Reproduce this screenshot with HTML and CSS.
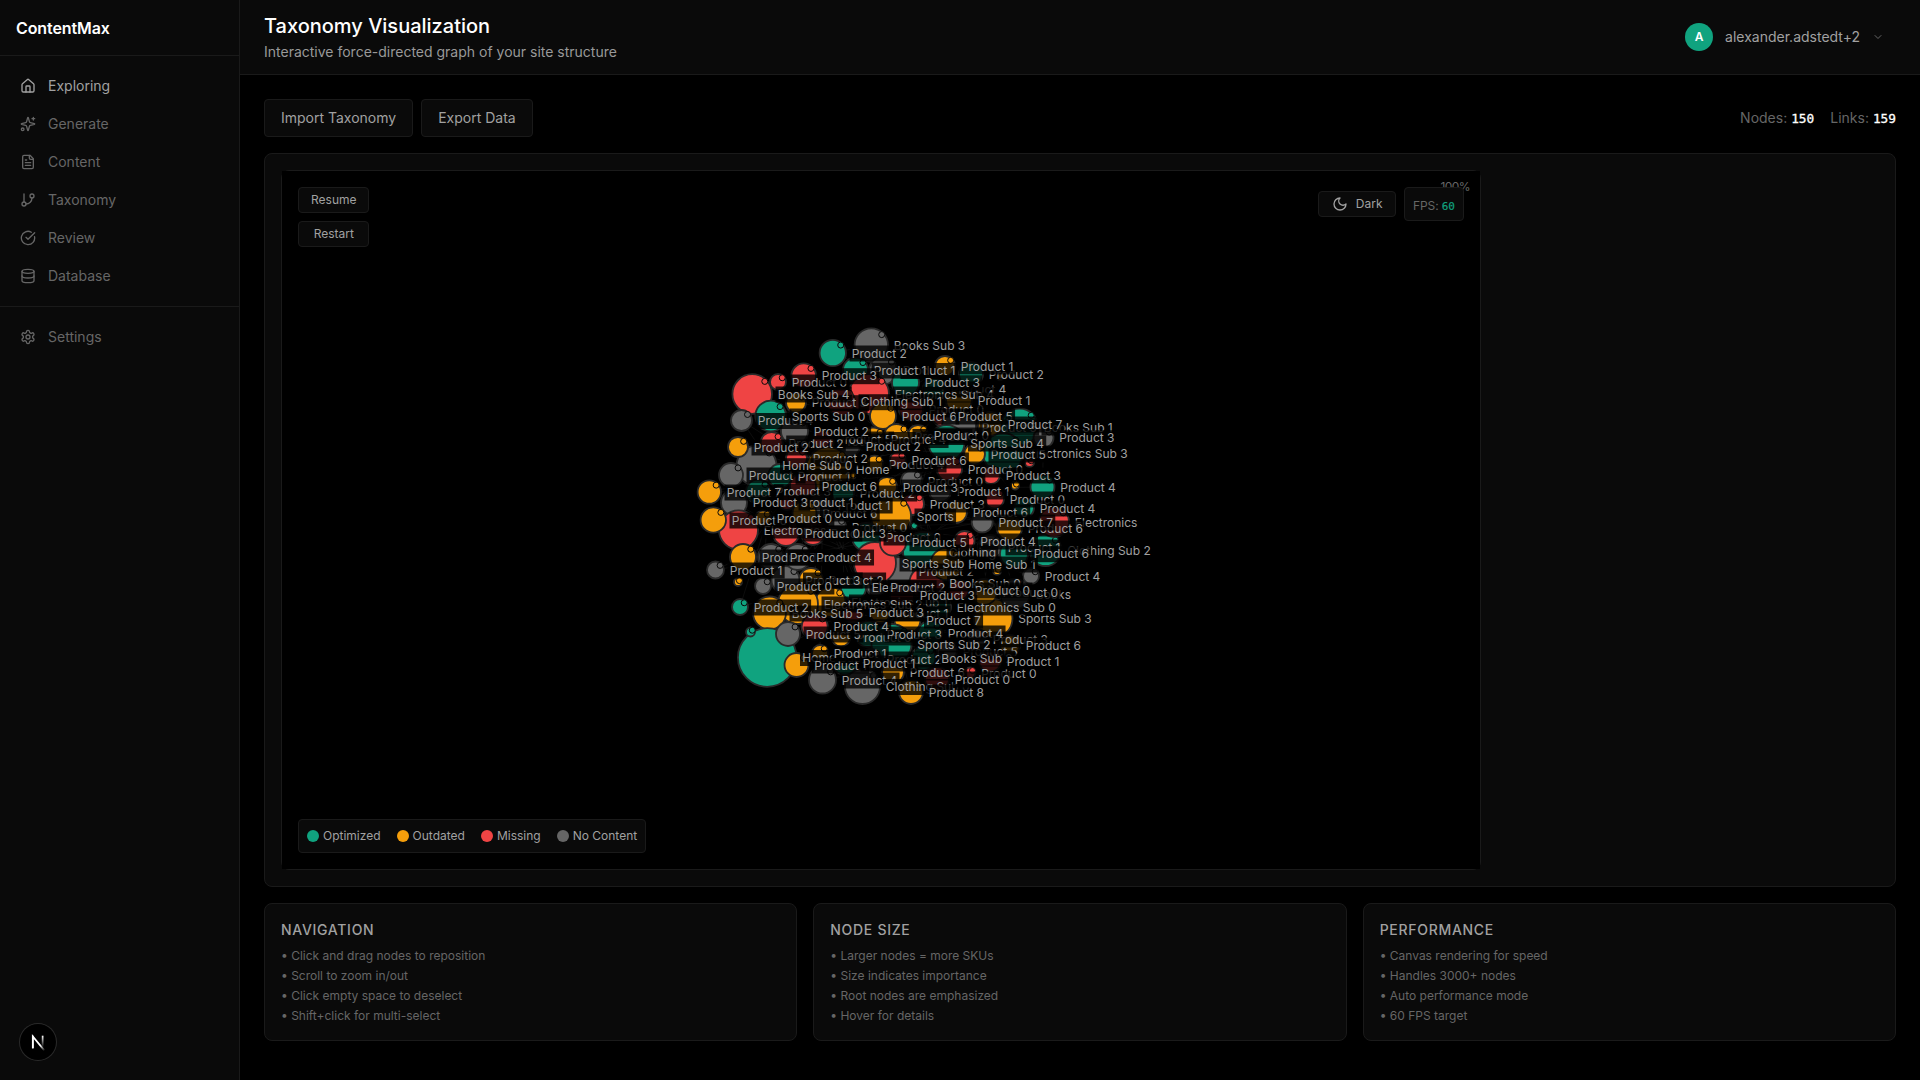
FILE: index.html
```html
<!DOCTYPE html>
<html lang="en">
<head>
<meta charset="utf-8">
<title>ContentMax</title>
<link rel="stylesheet" href="styles.css">
</head>
<body>
<div class="app">
  <aside class="sidebar">
    <div class="brand">ContentMax</div>
    <nav class="nav">
      <a class="nav-item active"><svg class="icon" viewBox="0 0 24 24"><path d="M15 21v-8a1 1 0 0 0-1-1h-4a1 1 0 0 0-1 1v8"/><path d="M3 10a2 2 0 0 1 .709-1.528l7-5.999a2 2 0 0 1 2.582 0l7 5.999A2 2 0 0 1 21 10v9a2 2 0 0 1-2 2H5a2 2 0 0 1-2-2z"/></svg>Exploring</a>
      <a class="nav-item"><svg class="icon" viewBox="0 0 24 24"><path d="M9.937 15.5A2 2 0 0 0 8.5 14.063l-6.135-1.582a.5.5 0 0 1 0-.962L8.5 9.936A2 2 0 0 0 9.937 8.5l1.582-6.135a.5.5 0 0 1 .963 0L14.063 8.5A2 2 0 0 0 15.5 9.937l6.135 1.581a.5.5 0 0 1 0 .964L15.5 14.063a2 2 0 0 0-1.437 1.437l-1.582 6.135a.5.5 0 0 1-.963 0z"/><path d="M20 2v4M22 4h-4"/><circle cx="4" cy="20" r="2"/></svg>Generate</a>
      <a class="nav-item"><svg class="icon" viewBox="0 0 24 24"><path d="M15 2H6a2 2 0 0 0-2 2v16a2 2 0 0 0 2 2h12a2 2 0 0 0 2-2V7Z"/><path d="M14 2v4a2 2 0 0 0 2 2h4M10 9H8M16 13H8M16 17H8"/></svg>Content</a>
      <a class="nav-item"><svg class="icon" viewBox="0 0 24 24"><path d="M6 3v12"/><circle cx="18" cy="6" r="3"/><circle cx="6" cy="18" r="3"/><path d="M18 9a9 9 0 0 1-9 9"/></svg>Taxonomy</a>
      <a class="nav-item"><svg class="icon" viewBox="0 0 24 24"><path d="M21.801 10A10 10 0 1 1 17 3.335"/><path d="m9 11 3 3L22 4"/></svg>Review</a>
      <a class="nav-item"><svg class="icon" viewBox="0 0 24 24"><ellipse cx="12" cy="5" rx="9" ry="3"/><path d="M3 5v14a9 3 0 0 0 18 0V5"/><path d="M3 12a9 3 0 0 0 18 0"/></svg>Database</a>
    </nav>
    <nav class="nav nav-secondary">
      <a class="nav-item"><svg class="icon" viewBox="0 0 24 24"><path d="M12.22 2h-.44a2 2 0 0 0-2 2v.18a2 2 0 0 1-1 1.73l-.43.25a2 2 0 0 1-2 0l-.15-.08a2 2 0 0 0-2.73.73l-.22.38a2 2 0 0 0 .73 2.73l.15.1a2 2 0 0 1 1 1.72v.51a2 2 0 0 1-1 1.74l-.15.09a2 2 0 0 0-.73 2.73l.22.38a2 2 0 0 0 2.73.73l.15-.08a2 2 0 0 1 2 0l.43.25a2 2 0 0 1 1 1.73V20a2 2 0 0 0 2 2h.44a2 2 0 0 0 2-2v-.18a2 2 0 0 1 1-1.73l.43-.25a2 2 0 0 1 2 0l.15.08a2 2 0 0 0 2.73-.73l.22-.39a2 2 0 0 0-.73-2.73l-.15-.08a2 2 0 0 1-1-1.74v-.5a2 2 0 0 1 1-1.74l.15-.09a2 2 0 0 0 .73-2.73l-.22-.38a2 2 0 0 0-2.73-.73l-.15.08a2 2 0 0 1-2 0l-.43-.25a2 2 0 0 1-1-1.73V4a2 2 0 0 0-2-2z"/><circle cx="12" cy="12" r="3"/></svg>Settings</a>
    </nav>
    <div class="dev-badge">
      <svg viewBox="0 0 40 40"><defs><linearGradient id="fadeA" x1="0" y1="0" x2="0" y2="1"><stop offset="0" stop-color="#fff"/><stop offset="1" stop-color="#fff" stop-opacity="0"/></linearGradient><linearGradient id="fadeB" gradientUnits="userSpaceOnUse" x1="20" y1="20" x2="27" y2="29"><stop offset="0.4" stop-color="#fff"/><stop offset="1" stop-color="#fff" stop-opacity="0.1"/></linearGradient></defs><path d="M14.2 27V13.8L27 29.3" fill="none" stroke="url(#fadeB)" stroke-width="1.9"/><path d="M13.3 13h1.9v14h-1.9z" fill="#fff"/><path d="M24.2 13h1.9v13h-1.9z" fill="url(#fadeA)"/></svg>
    </div>
  </aside>

  <div class="main">
    <header class="topbar">
      <div>
        <h1 class="title">Taxonomy Visualization</h1>
        <p class="subtitle">Interactive force-directed graph of your site structure</p>
      </div>
      <div class="user">
        <span class="avatar">A</span>
        <span class="user-name">alexander.adstedt+2</span>
        <svg class="chevron" viewBox="0 0 24 24"><path d="m6 9 6 6 6-6"/></svg>
      </div>
    </header>

    <main class="content">
      <div class="toolbar">
        <div class="actions"><button class="btn">Import Taxonomy</button><button class="btn">Export Data</button></div>
        <div class="stats"><span>Nodes: <b class="mono">150</b></span><span>Links: <b class="mono">159</b></span></div>
      </div>

      <section class="panel">
        <div class="stage">
          <svg id="graph" class="graph" viewBox="282 171 1198 698"></svg>
          <div class="sim-controls"><button class="btn-sm">Resume</button><button class="btn-sm">Restart</button></div>
          <span class="zoom-level">100%</span>
          <div class="view-controls">
            <button class="btn-sm theme"><svg class="moon" viewBox="0 0 24 24"><path d="M12 3a6 6 0 0 0 9 9 9 9 0 1 1-9-9Z"/></svg>Dark</button>
            <div class="fps">FPS: <span class="mono fps-value">60</span></div>
          </div>
          <div class="legend">
            <span class="key"><i class="dot green"></i>Optimized</span>
            <span class="key"><i class="dot orange"></i>Outdated</span>
            <span class="key"><i class="dot red"></i>Missing</span>
            <span class="key"><i class="dot gray"></i>No Content</span>
          </div>
        </div>
      </section>

      <section class="cards">
        <div class="card"><h2>Navigation</h2><p>• Click and drag nodes to reposition</p><p>• Scroll to zoom in/out</p><p>• Click empty space to deselect</p><p>• Shift+click for multi-select</p></div>
        <div class="card"><h2>Node Size</h2><p>• Larger nodes = more SKUs</p><p>• Size indicates importance</p><p>• Root nodes are emphasized</p><p>• Hover for details</p></div>
        <div class="card"><h2>Performance</h2><p>• Canvas rendering for speed</p><p>• Handles 3000+ nodes</p><p>• Auto performance mode</p><p>• 60 FPS target</p></div>
      </section>
    </main>
  </div>
</div>
<script src="graph.js"></script>
</body>
</html>
```
FILE: styles.css
```css
* { box-sizing: border-box; }
body { margin: 0; background: #000; color: #a1a1a1; font-family: Inter, "Liberation Sans", sans-serif; font-size: 14px; line-height: 20px; }
h1, h2, p { margin: 0; }
button { font: inherit; color: inherit; }
.app { display: flex; width: 1920px; height: 1080px; overflow: hidden; }

.sidebar { position: relative; width: 240px; background: #0a0a0a; border-right: 1px solid #1a1a1a; }
.brand { height: 56px; padding: 0 16px; border-bottom: 1px solid #1a1a1a; color: #fff; font-size: 16px; font-weight: 600; line-height: 56px; letter-spacing: -0.1px; }
.nav { display: flex; flex-direction: column; gap: 2px; padding: 12px 8px; }
.nav-item { display: flex; align-items: center; gap: 12px; height: 36px; padding: 0 12px; color: #666; }
.nav-item.active { color: #a1a1a1; }
.icon { width: 16px; height: 16px; fill: none; stroke: currentColor; stroke-width: 2; stroke-linecap: round; stroke-linejoin: round; }
.nav-secondary { border-top: 1px solid #1a1a1a; }
.dev-badge { position: absolute; left: 20px; bottom: 20px; width: 36px; height: 36px; border-radius: 50%; background: #000; box-shadow: 0 0 0 1px #2a2a2a; }
.dev-badge svg { display: block; width: 36px; height: 36px; }

.main { flex: 1; display: flex; flex-direction: column; }
.topbar { display: flex; justify-content: space-between; align-items: center; height: 75px; padding: 0 36px 0 24px; background: #0a0a0a; border-bottom: 1px solid #1a1a1a; }
.title { color: #fff; font-size: 20px; font-weight: 500; line-height: 28px; }
.subtitle { padding-top: 2px; line-height: 20px; color: #999; }
.user { display: flex; align-items: center; gap: 12px; }
.avatar { width: 28px; height: 28px; border-radius: 50%; background: #10a37f; color: #fff; font-size: 12px; font-weight: 600; line-height: 28px; text-align: center; }
.chevron { width: 12px; height: 12px; fill: none; stroke: #666; stroke-width: 2; stroke-linecap: round; stroke-linejoin: round; }

.content { padding: 24px; display: flex; flex-direction: column; gap: 16px; }
.toolbar { display: flex; justify-content: space-between; align-items: center; height: 38px; }
.actions { display: flex; gap: 8px; }
.btn { height: 38px; padding: 0 16px; background: #0a0a0a; border: 1px solid #1a1a1a; border-radius: 4px; }
.stats { display: flex; gap: 16px; color: #666; }
.mono { font-family: "DejaVu Sans Mono", "Liberation Mono", monospace; font-size: 12.8px; }
.stats b { color: #fff; font-weight: 400; -webkit-text-stroke: 0.3px #fff; }

.panel { height: 734px; padding: 16px; background: #0a0a0a; border: 1px solid #1a1a1a; border-radius: 8px; }
.stage { position: relative; width: 1200px; height: 700px; border: 1px solid #1a1a1a; border-radius: 8px; font-size: 12px; line-height: 16px; }
.graph { display: block; width: 1198px; height: 698px; background: #000; }
.graph text { fill: #a1a1a1; font-size: 12px; }
.sim-controls { position: absolute; left: 16px; top: 16px; display: flex; flex-direction: column; gap: 8px; }
.btn-sm { display: flex; justify-content: center; align-items: center; gap: 8px; height: 26px; padding: 0 12px; background: #0a0a0a; border: 1px solid #1a1a1a; border-radius: 4px; }
.zoom-level { position: absolute; right: 10px; top: 8px; color: #666; letter-spacing: -0.6px; }
.view-controls { position: absolute; right: 16px; top: 16px; display: flex; align-items: center; gap: 8px; }
.moon { width: 16px; height: 16px; fill: none; stroke: currentColor; stroke-width: 2; stroke-linecap: round; stroke-linejoin: round; }
.theme { padding: 0 12.5px; }
.fps { width: 60px; height: 34px; padding: 9px 0 0 8px; white-space: nowrap; background: #0a0a0a; border: 1px solid #1a1a1a; border-radius: 4px; color: #666; line-height: 17px; letter-spacing: -0.1px; }
.fps-value { color: #10a37f; font-size: 11px; -webkit-text-stroke: 0.2px #10a37f; }
.legend { position: absolute; left: 16px; bottom: 16px; display: flex; align-items: center; gap: 16px; height: 34px; padding: 0 8px; background: #0a0a0a; border: 1px solid #1a1a1a; border-radius: 4px; }
.key { display: flex; align-items: center; gap: 4px; }
.dot { width: 12px; height: 12px; border-radius: 50%; }
.green { background: #10a37f; }
.orange { background: #f59e0b; }
.red { background: #ef4444; }
.gray { background: #666; }

.cards { display: grid; grid-template-columns: repeat(3, 1fr); gap: 16px; }
.card { height: 138px; padding: 16px; background: #0a0a0a; border: 1px solid #1a1a1a; border-radius: 8px; }
.card h2 { margin-bottom: 8px; font-size: 14px; font-weight: 500; line-height: 20px; letter-spacing: 0.7px; text-transform: uppercase; }
.card p { margin-bottom: 4px; color: #666; font-size: 12px; line-height: 16px; }
```
FILE: graph.js
```js
// [label x, centre y, radius, status, label, label layer]
const P = "Product ";
const nodes = [
  [894,345,16.7,"n","Books Sub 3",0],[903,370.5,14,"n",P+1,0],[874,370,12.5,"g",P+1,1],[852,353,13.2,"g",P+2,2],
  [822,375.7,12.3,"r",P+3,3],[792,382,8,"r",P+0,1],[778,394,19.8,"r","Books Sub 4",3],[758,420.5,10.5,"n",P+4,1],
  [792,416,15.3,"g","Sports Sub 0",3],[812,402.7,10,"o",P+3,1],[895,394,20,"r","Electronics Sub 4",1],[861,401.7,14,"r","Clothing Sub 1",2],
  [951,389,11,"g",P+4,0],[925,382.7,13.5,"g",P+3,2],[961,366,10,"o",P+1,2],[989,374,12,"g",P+2,1],[978,400,13,"o",P+1,1],
  [929,409,12,"r",P+0,0],[958,416,10,"r",P+5,3],[902,416,13,"o",P+6,2],[982,427,17,"n",P+5,0],[1044,427,18.5,"g","Books Sub 1",0],
  [1029,453,20,"g","Electronics Sub 3",0],[1008,424,12,"o",P+7,3],[1059.5,437.7,10,"n",P+3,2],[934,435,10,"o",P+0,2],
  [970.5,443,18,"g","Sports Sub 4",3],[991,454,10.5,"o",P+5,2],[782.5,465.7,20,"n","Home Sub 0",3],[749,475,12,"n",P+7,1],
  [754,447,10,"o",P+2,3],[788.7,443,11,"r",P+2,1],[814,431,13.5,"n",P+2,1],[840,441,10,"r",P+1,0],[837,439,9,"r",P+5,0],
  [915,436.5,12.5,"o",P+0,0],[891,439.5,12,"o",P+4,1],[866,446,11,"n",P+2,3],[911.7,460,8,"r",P+6,3],[889,464,8.5,"o",P+4,1],
  [856,469,22,"o","Home",2],[813,458,10.5,"r",P+2,2],[968,469,12.5,"r",P+0,1],[1006,475,9,"r",P+3,2],[1060.5,487,12,"g",P+4,2],
  [957,491,11,"n",P+1,1],[928,481,10.5,"n",P+0,0],[903,487,10,"o",P+3,3],[860,493,11,"g",P+2,1],[930,504,11,"r",P+3,2],
  [1010,499,9.5,"r",P+0,1],[973,512,11,"o",P+6,2],[917,516,20,"o","Sports",3],[838,505,12,"n",P+1,2],[801,502,8,"r",P+1,3],
  [822.5,513,12,"o",P+6,1],[753,502.7,13,"n",P+3,4],[727,492,11.7,"o",P+7,2],[798,476,12,"g",P+1,1],[822,486,13,"r",P+6,3],
  [776,491.5,12,"g",P+3,1],[764,530,19.5,"r","Electronics",1],[777,518.5,8,"o",P+0,3],[732,520,12.7,"o",P+6,2],
  [831,533,12,"r",P+3,2],[805,533,13,"r",P+0,3],[852,527,10,"n",P+0,0],[886,537,14,"g",P+0,1],
  [949,552,20,"g","Clothing",1],[919,571,14,"n",P+2,0],[902,563,21,"r","Sports Sub 5",2],[912,542.7,13,"r",P+5,3],
  [949.5,583,17,"r","Books Sub 0",1],[968.5,564,16,"o","Home Sub 1",3],[957,607,11,"g","Electronics Sub 0",3],[1018.5,618.5,19.3,"o","Sports Sub 3",2],
  [1036,594,15,"n","Books",0],[1003,592,13,"o",P+0,1],[975,590,10,"r",P+0,3],[1045,576,8,"n",P+4,2],
  [1067.5,550,16,"g","Clothing Sub 2",1],[1008,547,12,"n",P+1,0],[1034,553.7,14,"g",P+6,3],[980.5,541,10,"r",P+4,2],
  [1075,522,15,"r","Electronics",1],[1028,528,12.5,"o",P+6,1],[998.7,522,10.5,"n",P+7,3],[1040,508,10,"g",P+4,3],
  [829,580,12,"o",P+2,0],[920,595.7,12,"r",P+3,3],[890.5,587,9,"n",P+2,2],[872,587.7,12.5,"g","Electronics",1],
  [805.5,580,14,"n",P+3,2],[777,586,8,"n",P+0,3],[790,557,13,"n",P+0,2],[762,557,13,"o",P+7,1],[816.5,557,13,"n",P+4,3],
  [730,570,8.5,"n",P+1,3],[851.5,602,15,"o","Electronics Sub 1",0],[824,604,20,"o","Electronics Sub 2",1],
  [754,607,8,"g",P+2,3],[792,613,16.5,"o","Books Sub 5",2],[869,612.5,10,"r",P+3,3],[833.7,626.7,13,"r",P+4,3],
  [802.5,657.5,29.3,"g","Home Sub 2",1],[806,634,12,"n",P+5,2],[814.5,665,12,"o",P+1,2],[834,653,8,"o",P+1,3],[856.5,637,9.5,"o",P+0,1],
  [842,680,13.5,"n",P+4,1],[863,663,12,"g",P+1,3],[886,686.5,17.5,"n","Clothing Sub 0",1],[929,692,12,"o",P+8,3],
  [910,672,11,"o",P+6,2],[926.5,620,13,"o",P+7,3],[887,634,13,"g",P+3,1],[917.5,644,20,"g","Sports Sub 2",3],[887,659,10,"n",P+2,1],
  [941.5,658,12,"g","Books Sub 2",2],[1007,661,11,"r",P+1,3],[981.5,673,5.5,"r",P+0,1],[955,679,12,"r",P+0,2],[948,633,12,"g",P+4,2],
  [993,639,10,"n",P+3,1],[1026,645,10,"o",P+6,3],[963,651,10,"n",P+5,0],[896,613,10,"o",P+1,0]
];
// Small nodes stay unlabelled: [centre x, centre y, radius, status]
const small = [[1000,377,3.5,"o"],[1029.5,462.5,4.5,"r"],[1015,485.5,4,"o"],[738,582,4,"o"],[750.5,632,4.5,"g"],[852,476,3.5,"o"],[914,526,2.5,"g"],[997,571,4,"o"],[851,560,3.5,"o"]];

const colors = { g: "#10a37f", o: "#f59e0b", r: "#ef4444", n: "#666666" };
const graph = document.getElementById("graph");

function add(tag, attrs) {
  const el = document.createElementNS("http://www.w3.org/2000/svg", tag);
  for (const key in attrs) el.setAttribute(key, attrs[key]);
  graph.appendChild(el);
  return el;
}

function drawNode(x, y, r, status) {
  add("circle", { cx: x, cy: y, r: r, fill: colors[status], stroke: "#2a2a2a", "stroke-width": 1.8 });
  const d = Math.max(0, (r - 2) * 0.707);
  add("circle", { cx: x + d, cy: y - d, r: 3, fill: colors[status], stroke: "#0a0a0a", "stroke-width": 1 });
}

const cx = n => n[0] - 6 - n[2];
nodes.forEach((n, i) => {
  const m = nodes[(i * 7 + 3) % nodes.length];
  add("line", { x1: cx(n), y1: n[1], x2: cx(m), y2: m[1], stroke: "#1a1a1a", "stroke-opacity": 0.5 });
});
nodes.forEach(n => drawNode(cx(n), n[1], n[2], n[3]));
small.forEach(s => drawNode(...s));

// Labels sit above every circle, each on its own dark backing
[...nodes].sort((a, b) => a[5] - b[5]).forEach(n => {
  const box = add("rect", { x: n[0] - 2.5, y: n[1] - 7.5, height: 16, fill: "#000", "fill-opacity": 0.8 });
  const text = add("text", { x: n[0] - 0.2, y: n[1] + 4.6 });
  text.textContent = n[4];
  box.setAttribute("width", text.getComputedTextLength() + 4.5);
});
```
